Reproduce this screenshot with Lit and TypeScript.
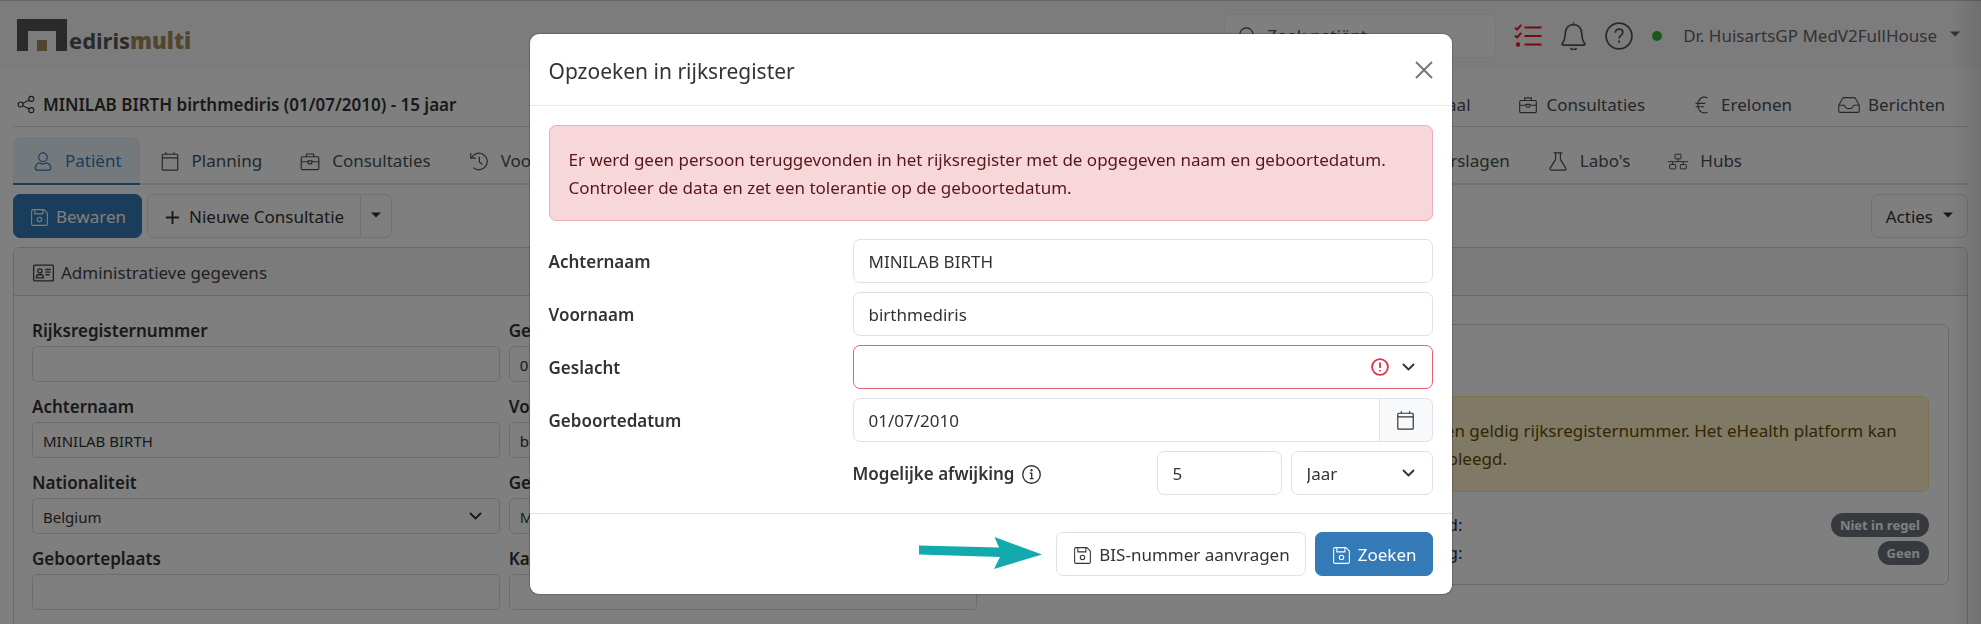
import { LitElement, html, css, svg, nothing, type SVGTemplateResult, type TemplateResult } from "lit";
import { customElement, property } from "lit/decorators.js";
import { classMap } from "lit/directives/class-map.js";

const ICONS: Record<string, SVGTemplateResult> = {
  share: svg`<circle cx="12.7" cy="3" r="2.2"/><circle cx="3.2" cy="8" r="2.2"/><circle cx="12.7" cy="13" r="2.2"/><path d="M5.2 7 10.7 4M5.2 9l5.5 3"/>`,
  person: svg`<circle cx="8" cy="4.4" r="3.6"/><path d="M3.4 15.3h9.2c1.3 0 2-.8 1.9-2-.2-2-1.600-3.600-3.500-4.200-1.800 1.100-4.200 1.100-6 0-1.900.6-3.300 2.200-3.500 4.200-.1 1.200.6 2 1.900 2z"/>`,
  calendar: svg`<rect x="1.500" y="1.900" width="13" height="13.400" rx=".8"/><path d="M1.500 4.900h13M4.500.200v1.800M11.500.200v1.800"/>`,
  briefcase: svg`<rect x=".6" y="4" width="14.800" height="10.800" rx="1"/><path d="M5 4V1.700h6V4M.6 8.200h5.700M9.700 8.200h5.700M6.300 7.400h3.400v1c0 1-.7 1.700-1.700 1.700s-1.700-.7-1.700-1.700z"/>`,
  history: svg`<path d="M1.900 4.400a7 7 0 1 1 1.300 8.800M1 .900v4.200h4.300M8.300 4v4.400l2.700 2.200"/>`,
  floppy: svg`<path d="M1.900.6h10.300l3.200 3.200v10.300a1.300 1.300 0 0 1-1.300 1.300H1.900A1.300 1.300 0 0 1 .6 14.100V1.900A1.300 1.300 0 0 1 1.900.6z"/><path d="M3.600.8v3.800h7.600V.8"/><circle cx="8" cy="9.800" r="2.100"/>`,
  plus: svg`<path d="M8 1v14M1 8h14"/>`,
  card: svg`<rect x=".6" y="2" width="18.800" height="15" rx="1.200"/><circle cx="6.600" cy="7.600" r="2"/><path d="M3.200 14.200c0-2.200 1.300-3.300 3.400-3.300s3.400 1.100 3.400 3.300zM11.800 6.200h5M11.800 8.700h5M11.800 11.200h4"/>`,
  search: svg`<circle cx="7" cy="7" r="6.200"/><path d="m11.500 11.500 4 4"/>`,
  checklist: svg`<path d="M1 3.700 3.100 5.600 7.200.900M1 11.600l2.100 1.900 4.100-4.700M10.500 3.500h17M10.500 12h17M10.500 20.500h17"/><circle cx="4" cy="20.500" r="1.200"/>`,
  bell: svg`<path d="M12 1.500V.300M2.200 22.300h19.600c1 0 1.500-.9.900-1.700-1.800-2.200-2.400-4-2.700-9.100-.2-5.500-3.200-9-8-9s-7.800 3.500-8 9c-.3 5.100-.9 6.900-2.700 9.100-.6.800-.1 1.700.9 1.700zM9.200 25.200c.9 1.900 4.700 1.900 5.600 0"/>`,
  help: svg`<circle cx="14" cy="14" r="12.900"/><path d="M10.300 10.800c0-2.300 1.600-3.600 3.800-3.600 2.100 0 3.700 1.300 3.700 3.300 0 2.800-3.700 2.900-3.700 5.900"/><path d="M14.050 18.600v2.200"/>`,
  euro: svg`<path d="M13 1.600C7.500-.4 4.400 3 4.400 8s3.100 8.400 8.600 6.400M2.300 6.500H11M2.300 9.500H10"/>`,
  inbox: svg`<path d="M.7 8.300 4 2.300C4.300 1.600 4.800 1.300 5.500 1.300h9c.7 0 1.200.3 1.500 1l3.300 6v5.200c0 .7-.5 1.200-1.200 1.200H1.900c-.7 0-1.200-.5-1.200-1.200zM.8 8.200H6c.3 2 1.700 3.100 4 3.100s3.700-1.100 4-3.100h5.200"/>`,
  flask: svg`<path d="M4.300.7h7.400M6 .8v5.400L1.400 13.600c-.5.900 0 1.700 1 1.700h11.200c1 0 1.500-.8 1-1.700L10 6.200V.8"/>`,
  hubs: svg`<rect x="7" y=".7" width="6" height="4.600" rx=".6"/><rect x="1.700" y="11" width="6" height="4.400" rx=".6"/><rect x="12.300" y="11" width="6" height="4.400" rx=".6"/><path d="M10 5.300V8.200M0 8.200h20M4.700 8.200V11M15.300 8.200V11"/>`,
  chevron: svg`<path d="m1 1 5.500 5.500L12 1"/>`,
  close: svg`<path d="m1 1 16 16M17 1 1 17"/>`,
  info: svg`<circle cx="9" cy="9" r="8.300"/><path d="M7.300 7.700h1.900v5M7.300 12.900h3.700"/><circle cx="9" cy="5" r=".5"/>`,
  error: svg`<circle cx="9" cy="9" r="7.900"/><path d="M9 4.500v5.600M9 12v1.600"/>`,
};

const icon = (name: string, w = 18, h = 18, box = "0 0 16 16", stroke = 1) => html`
  <svg class="icon" width=${w} height=${h} viewBox=${box} fill="none" stroke="currentColor"
    stroke-width=${stroke} stroke-linejoin="round" aria-hidden="true">${ICONS[name]}</svg>`;

const caret = html`<svg class="caret" width="10" height="6" viewBox="0 0 10 6" aria-hidden="true"><path d="M0 .500h10L5 5.500z" fill="currentColor"/></svg>`;
const chevron = icon("chevron", 13, 8, "0 0 13 8", 1.8);

const shared = css`
  *, *::before, *::after { box-sizing: border-box; }
  button, input, select { font: inherit; color: inherit; margin: 0; }
  button { cursor: pointer; }
  a { color: inherit; text-decoration: none; }
  .icon, .caret { flex: none; display: block; }
  .btn {
    display: inline-flex; align-items: center; gap: 8px; height: 44px; padding: 2px 15px 0 17px;
    border: 1px solid #dee2e6; border-radius: 7px; background: #fff; white-space: nowrap;
  }
  .btn.primary { background: #337ab7; border-color: #337ab7; color: #fff; }
  .control {
    width: 100%; min-width: 0; height: 44px; padding: 1px 15px 0; border: 1px solid #dee2e6;
    border-radius: 7px; background: #fff; appearance: none; outline: none;
  }
  .select { display: grid; align-items: center; min-width: 0; }
  .select > * { grid-area: 1 / 1; }
  .select > .icon { justify-self: end; margin-right: 18px; pointer-events: none; }
  .select > .error { color: #dc3545; margin-right: 44px; }
  .alert { border: 1px solid; border-radius: 7px; padding: 20px 19px 18px; line-height: 28px; }
`;

interface Field { id: string; label: string; value: string; options?: boolean }

const FIELDS: Field[] = [
  { id: "rrn", label: "Rijksregisternummer", value: "" },
  { id: "dob", label: "Geboortedatum", value: "01/07/2010" },
  { id: "last", label: "Achternaam", value: "MINILAB BIRTH" },
  { id: "first", label: "Voornaam", value: "birthmediris" },
  { id: "nat", label: "Nationaliteit", value: "Belgium", options: true },
  { id: "sex", label: "Geslacht", value: "Mannelijk", options: true },
  { id: "place", label: "Geboorteplaats", value: "" },
  { id: "cardnr", label: "Kaartnummer", value: "" },
];

@customElement("lookup-dialog")
export class LookupDialog extends LitElement {
  @property() lastName = "";
  @property() firstName = "";
  @property() birthDate = "";

  static styles = [shared, css`
    :host { display: block; width: 100%; max-width: 922px; color: #333; }
    .dialog { background: #fff; border-radius: 9px; box-shadow: 0 0 1px 1px rgba(0, 0, 0, .2); }
    .head {
      display: flex; align-items: center; justify-content: space-between; height: 72px;
      padding: 0 19px; border-bottom: 1px solid #e5e9ed;
    }
    .head h2 { margin: 0; padding-top: 3px; font-size: 21px; font-weight: 400; line-height: 30px; }
    .close { border: 0; background: none; padding: 0; color: #777; }
    .body { padding: 19px 19px 18px; }
    .alert { background: #f8d7da; border-color: #f1aeb5; color: #58151c; margin-bottom: 18px; }
    .rows { display: grid; grid-template-columns: 304px minmax(0, 1fr); gap: 9px 0; align-items: center; }
    .label { font-weight: 600; line-height: 28px; padding-top: 2px; }
    .invalid { border-color: #e4606d; }
    .date { display: flex; }
    .date .control { border-radius: 7px 0 0 7px; }
    .addon {
      width: 53px; flex: none; display: grid; place-items: center; border: 1px solid #dee2e6;
      border-left: 0; border-radius: 0 7px 7px 0; background: #f8f9fa; padding: 0;
    }
    .deviation { grid-column: 2; display: grid; grid-template-columns: minmax(0, 1fr) 125px 142px; gap: 9px; align-items: center; }
    .deviation .label { display: flex; align-items: center; gap: 8px; white-space: nowrap; }
    .foot {
      display: flex; align-items: center; justify-content: flex-end; gap: 9px;
      padding: 18px 19px; border-top: 1px solid #dbe4e6;
    }
    .pointer { margin-right: 5px; }
  `];

  render() {
    return html`
      <section class="dialog" role="dialog" aria-labelledby="title">
        <header class="head">
          <h2 id="title">Opzoeken in rijksregister</h2>
          <button class="close" aria-label="Sluiten">${icon("close", 18, 18, "0 0 18 18", 2)}</button>
        </header>
        <div class="body">
          <div class="alert" role="alert">Er werd geen persoon teruggevonden in het rijksregister met de opgegeven naam en geboortedatum. Controleer de data en zet een tolerantie op de geboortedatum.</div>
          <div class="rows">
            <label class="label" for="last">Achternaam</label>
            <input class="control" id="last" .value=${this.lastName}>
            <label class="label" for="first">Voornaam</label>
            <input class="control" id="first" .value=${this.firstName}>
            <label class="label" for="sex">Geslacht</label>
            <div class="select">
              <select class="control invalid" id="sex" aria-invalid="true"><option></option><option>Man</option><option>Vrouw</option></select>
              <svg class="icon error" width="18" height="18" viewBox="0 0 18 18" fill="none" stroke="currentColor" stroke-width="1.800">${ICONS.error}</svg>
              ${chevron}
            </div>
            <label class="label" for="date">Geboortedatum</label>
            <div class="date">
              <input class="control" id="date" .value=${this.birthDate}>
              <button class="addon" aria-label="Kies datum">${icon("calendar", 19, 19)}</button>
            </div>
            <div class="deviation">
              <label class="label" for="amount">Mogelijke afwijking ${icon("info", 19, 19, "0 0 18 18", 1.3)}</label>
              <input class="control" id="amount" value="5">
              <div class="select">
                <select class="control" aria-label="Eenheid"><option>Jaar</option><option>Maand</option></select>
                ${chevron}
              </div>
            </div>
          </div>
        </div>
        <footer class="foot">
          <svg class="pointer" width="123" height="34" viewBox="0 0 123 34" aria-hidden="true">
            <path d="M0 8.500 80 10.500 75.500 0 123 17.500 75 32 81 20 0 17.500z" fill="#14a9ad"/>
          </svg>
          <button class="btn">${icon("floppy", 17, 17)}BIS-nummer aanvragen</button>
          <button class="btn primary">${icon("floppy", 17, 17)}Zoeken</button>
        </footer>
      </section>`;
  }
}

@customElement("app-root")
export class AppRoot extends LitElement {
  static styles = [shared, css`
    :host {
      display: block; height: 100vh; overflow: hidden; background: #fff; color: #333;
      font: 400 17px/28px "Noto Sans", "Open Sans", sans-serif;
    }
    .topbar {
      display: flex; align-items: center; height: 70px; padding: 0 21px 0 17px;
      background: #f8f9fa; border-top: 1px solid #ccc;
    }
    .logo { display: flex; align-items: flex-end; gap: 2px; height: 32px; margin-bottom: 2px; }
    .logo svg { display: block; }
    .wordmark { font-weight: 700; font-size: 22px; line-height: 22px; color: #555; }
    .wordmark b { color: #a48a5a; }
    .search {
      display: flex; align-items: center; gap: 11px; width: 272px; height: 44px; margin-left: auto;
      padding: 0 14px; border: 1px solid #e9ecef; border-radius: 7px; background: #fff; color: #444;
    }
    .search input { border: 0; outline: 0; background: none; padding: 0; min-width: 0; width: 100%; }
    .search input::placeholder { color: #555; opacity: 1; }
    .tools { display: flex; align-items: center; gap: 19px; margin-left: 18px; color: #555; }
    .tools button { border: 0; background: none; padding: 0; color: inherit; }
    .tools .todo { color: #f0141e; }
    .dot { width: 10px; height: 10px; border-radius: 50%; background: #37b337; }
    .tools .user { display: flex; align-items: center; gap: 13px; padding-left: 2px; color: #666; }
    .user .caret { margin-bottom: 4px; }

    .page { padding: 0 13px; }
    .patient { display: flex; align-items: center; gap: 8px; height: 57px; padding: 13px 0 0 4px; border-bottom: 1px solid #d5d8dc; }
    .patient h1 { margin: 0; font-size: 17px; line-height: 28px; font-weight: 600; }
    .global { display: flex; margin-left: auto; color: #495057; }
    .global a { display: flex; align-items: center; gap: 8px; padding: 0 23px; white-space: nowrap; }
    .global .icon { width: 22px; }
    .tabs { display: flex; margin-top: 10px; height: 48px; border-bottom: 2px solid #dee2e6; color: #495057; }
    .tabs .later { display: flex; margin-left: auto; margin-right: 208px; }
    .tab {
      display: flex; align-items: center; gap: 12px; height: 48px; padding: 2px 18px 0 20px;
      border-bottom: 2px solid transparent; border-radius: 7px 7px 0 0; white-space: nowrap;
    }
    .tab .icon { width: 20px; }
    .tab.active { background: #e9f3fb; border-bottom-color: #337ab7; color: #337ab7; }
    .toolbar { display: flex; align-items: center; gap: 5px; margin-top: 9px; }
    .toolbar .actions { margin-left: auto; gap: 10px; padding: 2px 14px 0; }
    .toolbar .caret { margin-bottom: 4px; }
    .split { display: flex; }
    .split .btn:first-child { border-radius: 7px 0 0 7px; gap: 9px; padding: 2px 16px 0 17px; }
    .split .btn:last-child { border-radius: 0 7px 7px 0; border-left: 0; padding: 2px 10px 0; }

    .card { margin-top: 9px; border: 1px solid #cfd2d5; border-radius: 7px 7px 0 0; }
    .card-head {
      display: flex; align-items: center; gap: 7px; height: 48px; padding: 2px 19px 0;
      background: #f7f7f8; border-bottom: 1px solid #cfd2d5; border-radius: 6px 6px 0 0; color: #444;
    }
    .card-body { display: grid; grid-template-columns: repeat(2, minmax(0, 1fr)); gap: 28px; padding: 21px 18px; align-items: start; }
    .form { display: grid; grid-template-columns: repeat(2, minmax(0, 1fr)); gap: 11px 9px; }
    .field { display: grid; gap: 1px; }
    .field label { font-weight: 600; line-height: 28px; }
    .field .control { height: 36px; padding: 1px 10px 0; font-size: 15px; border-radius: 5px; border-color: #d8dbdf; }

    .panel { margin-top: 7px; border: 1px solid #cfd2d5; border-radius: 7px; padding: 19px 19px 17px; }
    .panel h3 { margin: 0 0 20px; font-size: 17px; line-height: 32px; font-weight: 600; }
    .panel .alert { background: #fff3cd; border-color: #ffe69c; color: #664d03; margin-bottom: 19px; }
    .status { display: flex; justify-content: space-between; align-items: center; height: 28px; margin: 0; }
    .status dt { width: 438px; text-align: right; }
    .status dd { margin: 0; background: #6c757d; color: #fff; border-radius: 12px; font-size: 13px; font-weight: 700; line-height: 24px; padding: 0 9px; }
    dl { margin: 0; }

    .backdrop {
      position: fixed; inset: 0; display: flex; justify-content: center; align-items: flex-start; padding-top: 34px;
      background: linear-gradient(to left, rgba(0, 0, 0, .1), transparent 32px), rgba(0, 0, 0, .5);
    }
  `];

  private link(name: string, text: string, w = 20, box = "0 0 16 16") {
    return html`<a href="#">${icon(name, w, 18, box)}${text}</a>`;
  }

  private tab(name: string, text: string, active = false, box = "0 0 16 16"): TemplateResult {
    return html`<a href="#" class=${classMap({ tab: true, active })} aria-current=${active ? "page" : nothing}>
      ${icon(name, 20, 19, box)}${text}</a>`;
  }

  private field(f: Field) {
    return html`<div class="field">
      <label for=${f.id}>${f.label}</label>
      ${f.options
        ? html`<div class="select"><select class="control" id=${f.id}><option>${f.value}</option></select>${chevron}</div>`
        : html`<input class="control" id=${f.id} .value=${f.value}>`}
    </div>`;
  }

  render() {
    return html`
      <header class="topbar">
        <a class="logo" href="#" aria-label="Medirismulti">
          <svg width="50" height="32" viewBox="0 0 50 32" aria-hidden="true">
            <path d="M0 0h50v32H39V12H11v20H0z" fill="#555"/><path d="M20 21h10v11H20z" fill="#a48a5a"/>
          </svg>
          <span class="wordmark">ediris<b>multi</b></span>
        </a>
        <label class="search">${icon("search", 17, 17)}<input placeholder="Zoek patiënt" aria-label="Zoek patiënt"></label>
        <div class="tools">
          <button class="todo" aria-label="Taken">${icon("checklist", 28, 23, "0 0 28 23", 2)}</button>
          <button aria-label="Meldingen">${icon("bell", 25, 28, "0 0 24 27", 1.6)}</button>
          <button aria-label="Help">${icon("help", 28, 28, "0 0 28 28", 1.8)}</button>
          <span class="dot"></span>
          <button class="user">Dr. HuisartsGP MedV2FullHouse ${caret}</button>
        </div>
      </header>
      <main class="page">
        <div class="patient">
          ${icon("share", 18, 19)}
          <h1>MINILAB BIRTH birthmediris (01/07/2010) - 15 jaar</h1>
          <nav class="global">
            ${this.link("person", "Portaal")}${this.link("briefcase", "Consultaties")}${this.link("euro", "Erelonen")}${this.link("inbox", "Berichten", 22, "0 0 20 16")}
          </nav>
        </div>
        <nav class="tabs">
          ${this.tab("person", "Patiënt", true)}${this.tab("calendar", "Planning")}${this.tab("briefcase", "Consultaties")}${this.tab("history", "Voorgeschiedenis")}
          <div class="later">
            ${this.tab("inbox", "Verslagen", false, "0 0 20 16")}${this.tab("flask", "Labo's")}${this.tab("hubs", "Hubs", false, "0 0 20 16")}
          </div>
        </nav>
        <div class="toolbar">
          <button class="btn primary">${icon("floppy", 17, 17)}Bewaren</button>
          <div class="split">
            <button class="btn">${icon("plus", 15, 15, "0 0 16 16", 2)}Nieuwe Consultatie</button>
            <button class="btn" aria-label="Meer">${caret}</button>
          </div>
          <button class="btn actions">Acties ${caret}</button>
        </div>
        <section class="card">
          <div class="card-head">${icon("card", 21, 20, "0 0 20 19", 1.3)}Administratieve gegevens</div>
          <div class="card-body">
            <div class="form">${FIELDS.map((f) => this.field(f))}</div>
            <div class="panel">
              <h3>Verzekerbaarheid</h3>
              <div class="alert">Deze patiënt heeft in het medische dossier nog geen geldig rijksregisternummer. Het eHealth platform kan daarom voor deze patiënt hier niet worden geraadpleegd.</div>
              <dl>
                <div class="status"><dt>Verzekerbaarheid:</dt><dd>Niet in regel</dd></div>
                <div class="status"><dt>Derdebetalersregeling:</dt><dd>Geen</dd></div>
              </dl>
            </div>
          </div>
        </section>
      </main>
      <div class="backdrop">
        <lookup-dialog lastName="MINILAB BIRTH" firstName="birthmediris" birthDate="01/07/2010"></lookup-dialog>
      </div>`;
  }
}
